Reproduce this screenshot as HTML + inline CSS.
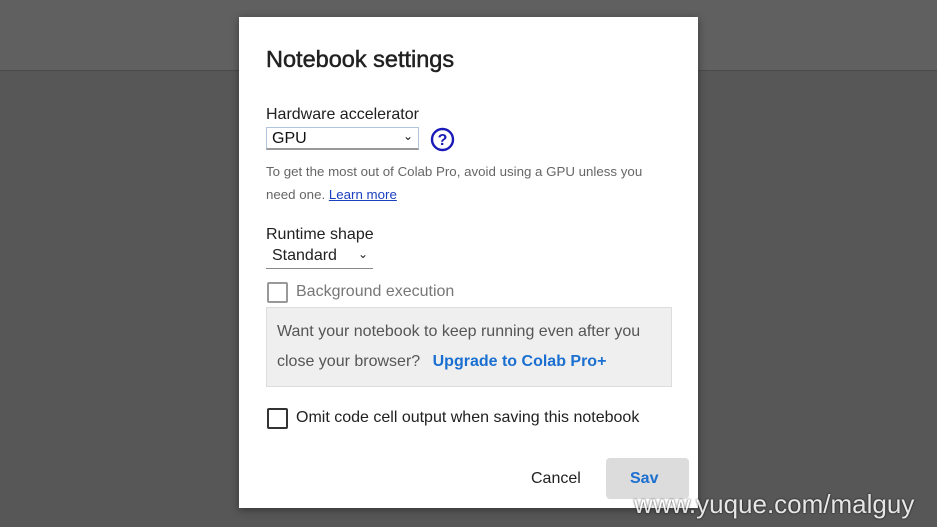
<!DOCTYPE html>
<html><head><style>
body{margin:0;width:937px;height:527px;overflow:hidden;background:#575757;font-family:"Liberation Sans",Arial,sans-serif;position:relative}
.top{position:absolute;left:0;top:0;width:937px;height:70px;background:#606060;border-bottom:1px solid #4a4a4a}
.dlg{position:absolute;left:239px;top:17px;width:459px;height:491px;background:#fff;box-shadow:0 2px 8px rgba(0,0,0,.4)}
.a{position:absolute;white-space:nowrap}
h1{position:absolute;left:27px;top:29px;margin:0;font-size:23.5px;font-weight:normal;color:#212121;-webkit-text-stroke:.5px #212121}
.lbl{font-size:16px;color:#212121}
.sel{position:absolute;left:27px;top:110px;width:153px;height:23px;border:1px solid #b0c4de;border-bottom:2px solid #999;box-sizing:border-box;font-size:16px;padding:2px 5px;color:#111}
.small{font-size:13px;color:#666}
.cb{position:absolute;width:17px;height:17px;border:2px solid #777;border-radius:2px}
.box{position:absolute;left:27px;top:290px;width:404px;height:78px;background:#efefef;border:1px solid #ddd}
</style></head><body>
<div class="top"></div>
<div class="dlg">
<h1>Notebook settings</h1>
<div class="a lbl" style="left:27px;top:89px">Hardware accelerator</div>
<div class="sel">GPU<span style="position:absolute;right:5px;top:1px;font-size:12px">&#8964;</span></div>
<svg class="a" style="left:191px;top:110px" width="25" height="25" viewBox="0 0 25 25"><circle cx="12.5" cy="12.5" r="10.5" fill="none" stroke="#1a1ab8" stroke-width="2.4"/><text x="12.5" y="18" text-anchor="middle" font-size="16" font-weight="bold" fill="#1a1ab8" font-family="Liberation Sans">?</text></svg>
<div class="a small" style="left:27px;top:147px;font-size:13.3px">To get the most out of Colab Pro, avoid using a GPU unless you</div>
<div class="a small" style="left:27px;top:170px;font-size:13.3px">need one. <span style="color:#1a3fbf;text-decoration:underline">Learn more</span></div>
<div class="a lbl" style="left:27px;top:209px">Runtime shape</div>
<div class="a" style="left:27px;top:230px;width:107px;height:22px;border-bottom:1px solid #888;font-size:16px;color:#212121;padding-left:6px;box-sizing:border-box">Standard<span style="position:absolute;right:5px;top:0;font-size:12px">&#8964;</span></div>
<div class="cb" style="left:28px;top:265px;border-color:#999"></div>
<div class="a" style="left:57px;top:266px;font-size:16px;color:#777">Background execution</div>
<div class="box"></div>
<div class="a" style="left:38px;top:306px;font-size:16px;color:#555">Want your notebook to keep running even after you</div>
<div class="a" style="left:38px;top:336px;font-size:16px;color:#555">close your browser? <span style="color:#1a6fd0;margin-left:8px;font-weight:bold">Upgrade to Colab Pro+</span></div>
<div class="cb" style="left:28px;top:391px;border-color:#333"></div>
<div class="a" style="left:57px;top:392px;font-size:16px;color:#212121">Omit code cell output when saving this notebook</div>
<div class="a" style="left:292px;top:453px;font-size:16px;color:#222">Cancel</div>
<div class="a" style="left:367px;top:441px;width:83px;height:41px;background:#dcdcdc;border-radius:4px"></div>
<div class="a" style="left:391px;top:453px;font-size:16px;color:#1a6fd0;font-weight:bold">Sav</div>
</div>
<div class="a" style="left:634px;top:489px;font-size:26px;color:#fff;opacity:.85;text-shadow:0 0 2px #000">www.yuque.com/malguy</div>
</body></html>
